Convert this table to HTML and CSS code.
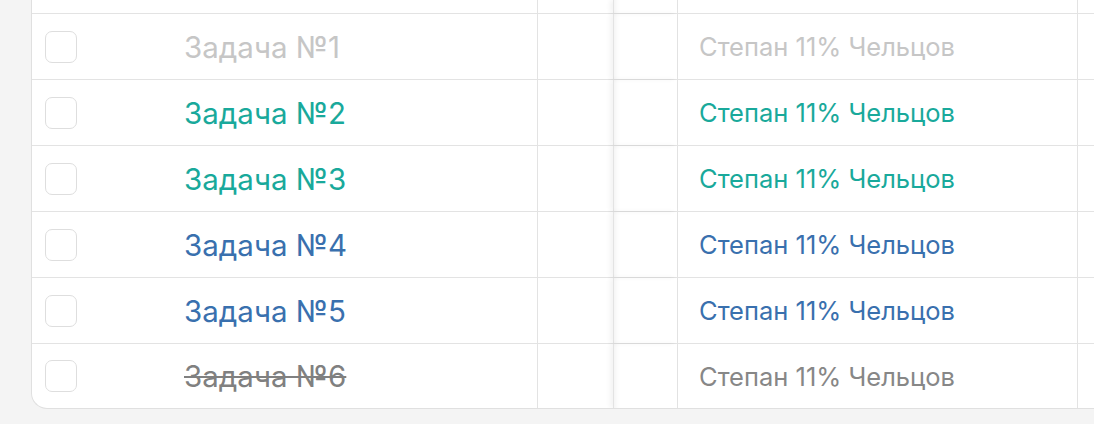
FILE: index.html
```html
<!DOCTYPE html>
<html lang="ru">
<head>
<meta charset="utf-8">
<link rel="stylesheet" href="styles.css">
</head>
<body>
<div class="card">
  <div class="row top">
    <div class="cell c1"></div><div class="cell c2"></div><div class="cell c3"></div><div class="cell c4"></div><div class="cell c5"></div>
  </div>
  <div class="row faded">
    <div class="cell c1"><span class="box"></span><span class="name">Задача №1</span></div><div class="cell c2"></div><div class="cell c3"></div><div class="cell c4"><span class="person">Степан 11% Чельцов</span></div><div class="cell c5"></div>
  </div>
  <div class="row teal">
    <div class="cell c1"><span class="box"></span><span class="name">Задача №2</span></div><div class="cell c2"></div><div class="cell c3"></div><div class="cell c4"><span class="person">Степан 11% Чельцов</span></div><div class="cell c5"></div>
  </div>
  <div class="row teal">
    <div class="cell c1"><span class="box"></span><span class="name">Задача №3</span></div><div class="cell c2"></div><div class="cell c3"></div><div class="cell c4"><span class="person">Степан 11% Чельцов</span></div><div class="cell c5"></div>
  </div>
  <div class="row blue">
    <div class="cell c1"><span class="box"></span><span class="name">Задача №4</span></div><div class="cell c2"></div><div class="cell c3"></div><div class="cell c4"><span class="person">Степан 11% Чельцов</span></div><div class="cell c5"></div>
  </div>
  <div class="row blue">
    <div class="cell c1"><span class="box"></span><span class="name">Задача №5</span></div><div class="cell c2"></div><div class="cell c3"></div><div class="cell c4"><span class="person">Степан 11% Чельцов</span></div><div class="cell c5"></div>
  </div>
  <div class="row done last">
    <div class="cell c1"><span class="box"></span><span class="name">Задача №6</span></div><div class="cell c2"></div><div class="cell c3"></div><div class="cell c4"><span class="person">Степан 11% Чельцов</span></div><div class="cell c5"></div>
  </div>
</div>
</body>
</html>
```

FILE: styles.css
```css
* { box-sizing: border-box; }
html, body { margin: 0; padding: 0; }
body {
  background: #f4f4f4;
  font-family: Inter, Roboto, "Liberation Sans", sans-serif;
  overflow: hidden;
  height: 424px;
}
.card {
  margin-left: 31px;
  width: 1080px;
  background: #fff;
  border-left: 1.5px solid #e0e0e0;
  border-bottom: 1.5px solid #e0e0e0;
  border-bottom-left-radius: 16px;
  overflow: hidden;
}
.row {
  display: grid;
  grid-template-columns: 505px 76px 64px 400px 1fr;
  height: 66px;
  border-bottom: 1.5px solid #e3e3e3;
}
.row.top { height: 14px; }
.row.last { border-bottom: none; height: 64px; }
.cell {
  display: flex;
  align-items: center;
  border-left: 1.5px solid #e3e3e3;
}
.cell.c1 { border-left: none; padding-left: 13px; }
.cell.c3 { box-shadow: inset 6px 0 5px -4px rgba(0,0,0,0.05), -3px 0 5px rgba(0,0,0,0.05); position: relative; }
.cell.c4 { padding-left: 21px; }
.box {
  width: 32px;
  height: 32px;
  border: 1.5px solid #dedede;
  border-radius: 7px;
  flex: none;
}
.name {
  margin-left: 107px;
  font-size: 29.5px;
}
.person { font-size: 25.5px; }
.faded .name, .faded .person { color: #c6c6c6; }
.teal .name, .teal .person { color: #19a99b; }
.blue .name, .blue .person { color: #3970ae; }
.done .name { color: #808080; text-decoration: line-through; text-decoration-thickness: 2px; }
.done .person { color: #878787; }
```
